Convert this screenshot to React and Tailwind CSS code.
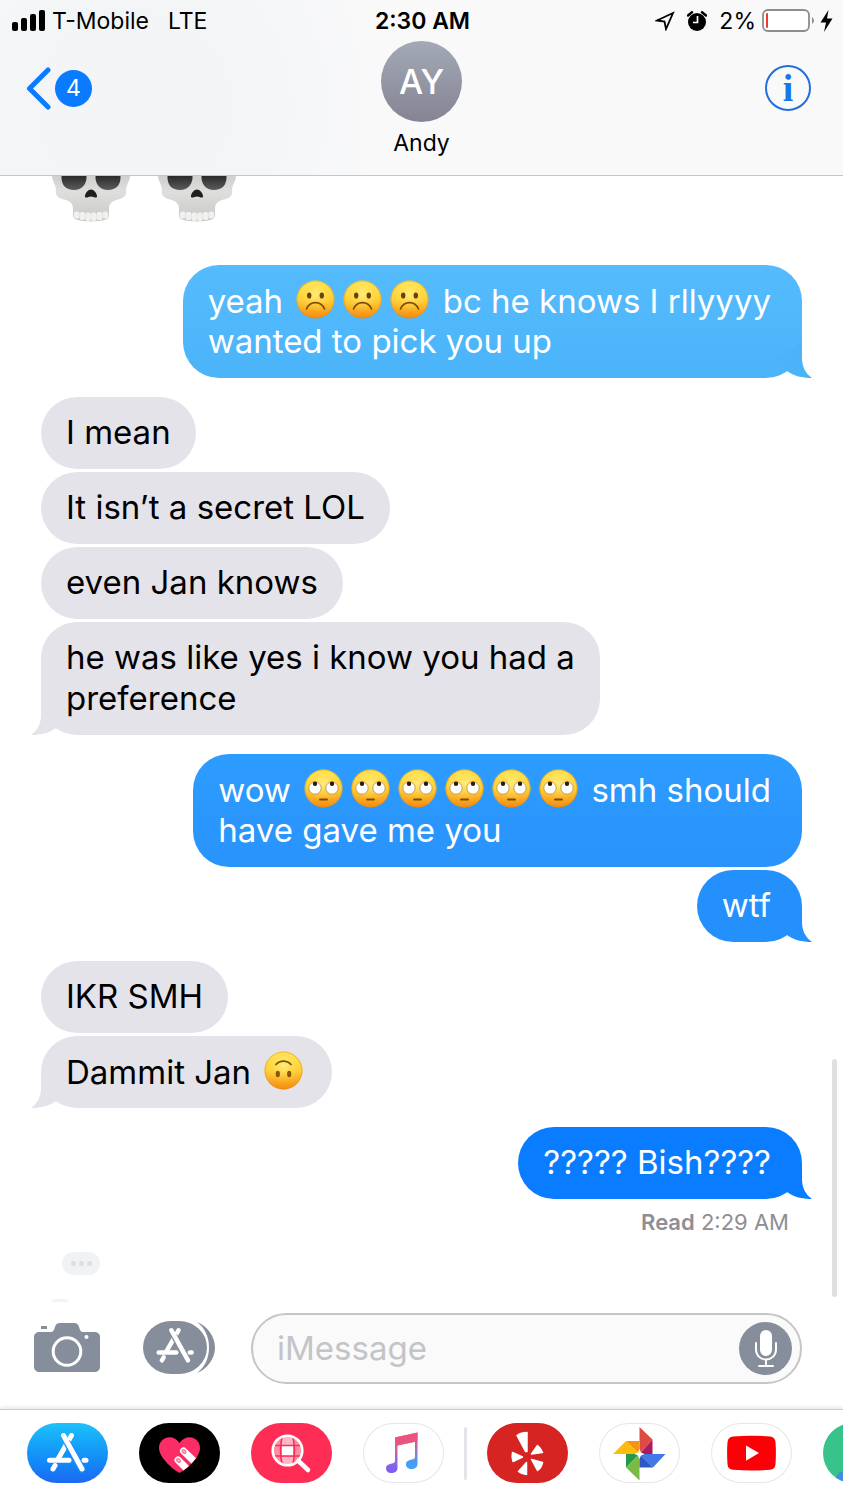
import React from "react";

function SharedDefs() {
  return (
    <svg className="absolute h-0 w-0" aria-hidden="true">
      <defs>
        <linearGradient id="face" x1="0" y1="0" x2="0" y2="1">
          <stop offset="0" stopColor="#ffe54f" />
          <stop offset="0.5" stopColor="#ffcf36" />
          <stop offset="1" stopColor="#f58a10" />
        </linearGradient>
        <radialGradient id="faceGlow" cx="0.5" cy="0.36" r="0.5">
          <stop offset="0" stopColor="#fff394" stopOpacity="0.75" />
          <stop offset="1" stopColor="#ffd83f" stopOpacity="0" />
        </radialGradient>
        <linearGradient id="bone" x1="0" y1="0" x2="0" y2="1">
          <stop offset="0" stopColor="#cfcfce" />
          <stop offset="0.35" stopColor="#dededd" />
          <stop offset="0.7" stopColor="#d2d2d1" />
          <stop offset="1" stopColor="#c9c9c8" />
        </linearGradient>
        <linearGradient id="socket" x1="0" y1="0" x2="0" y2="1">
          <stop offset="0" stopColor="#2a2a2a" />
          <stop offset="1" stopColor="#5c5c5c" />
        </linearGradient>
        <linearGradient id="note" x1="0" y1="0" x2="0" y2="1">
          <stop offset="0" stopColor="#f0506e" />
          <stop offset="0.35" stopColor="#d9609c" />
          <stop offset="0.75" stopColor="#8c63e8" />
          <stop offset="1" stopColor="#7a5cf5" />
        </linearGradient>
        <linearGradient id="noteBlue" x1="0" y1="0" x2="0" y2="1">
          <stop offset="0" stopColor="#f0506e" />
          <stop offset="0.4" stopColor="#b765b4" />
          <stop offset="0.8" stopColor="#4a9bf0" />
          <stop offset="1" stopColor="#3fa5f8" />
        </linearGradient>
        <clipPath id="heartClip">
          <path d="M40.500 50 C35 47 20 35 20 25 C20 14 34 10 40.500 20 C47 10 61 14 61 25 C61 35 46 47 40.500 50Z" />
        </clipPath>
        <clipPath id="globeClip">
          <circle cx="36.500" cy="27.500" r="14" />
        </clipPath>
      </defs>
    </svg>
  );
}

function Emoji({ label, children }) {
  return (
    <svg role="img" aria-label={label} viewBox="0 0 39 39" className="mx-1 mb-2 inline-block size-[39px] align-middle">
      <circle cx="19.5" cy="19.500" r="19" fill="url(#face)" />
      <circle cx="19.5" cy="19.500" r="18.500" fill="url(#faceGlow)" stroke="#e08a10" strokeOpacity="0.5" />
      {children}
    </svg>
  );
}

function Frown() {
  return (
    <Emoji label="frowning face">
      <ellipse cx="13.200" cy="15.500" rx="2.200" ry="3.100" fill="#6b4205" />
      <ellipse cx="25.800" cy="15.500" rx="2.200" ry="3.100" fill="#6b4205" />
      <path d="M10.500 29 C14 20.500 25 20.500 28.500 29" fill="none" stroke="#7a4a05" strokeWidth="1.600" strokeLinecap="round" />
    </Emoji>
  );
}

function RollingEyes() {
  return (
    <Emoji label="face with rolling eyes">
      <circle cx="11" cy="19" r="6.200" fill="#fff" stroke="#b8974e" strokeWidth="0.900" />
      <circle cx="28" cy="19" r="6.200" fill="#fff" stroke="#b8974e" strokeWidth="0.900" />
      <circle cx="11" cy="14.800" r="2.200" fill="#2e1a0c" />
      <circle cx="28" cy="14.800" r="2.200" fill="#2e1a0c" />
      <path d="M16 30.500 H23" stroke="#7a4a05" strokeWidth="1.800" strokeLinecap="round" />
    </Emoji>
  );
}

function UpsideDown() {
  return (
    <Emoji label="upside-down face">
      <path d="M12 13.500 C16 9 23 9 27 13.500" fill="none" stroke="#7a5205" strokeWidth="1.700" strokeLinecap="round" />
      <ellipse cx="13.800" cy="23" rx="2.100" ry="3.200" fill="#8a5607" />
      <ellipse cx="25.200" cy="23" rx="2.100" ry="3.200" fill="#8a5607" />
    </Emoji>
  );
}

function Skull() {
  return (
    <svg role="img" aria-label="skull" viewBox="0 0 80 46" className="h-[46px] w-20">
      <path
        d="M1 0 H79 C79 5 75 9 75 14 C76 20 73 22 65 24 C60 26 58 28 58 33 C58 38 59 42 55 43.500 C48 46 32 46 25 43.500 C21 42 22 38 22 33 C22 28 20 26 15 24 C7 22 4 20 5 14 C5 9 1 5 1 0Z"
        fill="url(#bone)"
      />
      <path d="M10.500 0 H35.500 C36 8 31 14 23 14 C15 14 10 9 10.500 0Z M44.500 0 H69.500 C70 9 65 14 57 14 C49 14 44 8 44.500 0Z" fill="url(#socket)" />
      <path d="M40 13.500 C43.500 13.500 46.500 18.500 46 21 C44.500 22.500 42.500 20.500 40 20.500 C37.500 20.500 35.500 22.500 34 21 C33.500 18.500 36.500 13.500 40 13.500Z" fill="#1f1f1f" />
      <g fill="#f1f1f0">
        <rect x="23" y="35.500" width="5.500" height="7" rx="2" />
        <rect x="28.700" y="36" width="5.500" height="8" rx="2" />
        <rect x="34.400" y="36.500" width="5.500" height="8.500" rx="2" />
        <rect x="40.100" y="36.500" width="5.500" height="8.500" rx="2" />
        <rect x="45.800" y="36" width="5.500" height="8" rx="2" />
        <rect x="51.500" y="35.500" width="5.500" height="7" rx="2" />
      </g>
    </svg>
  );
}

function Tail({ side, className }) {
  const flip = side === "left" ? "-left-[10px] -scale-x-100" : "-right-[10px]";
  return (
    <svg aria-hidden="true" viewBox="0 0 48 36" className={`absolute bottom-0 h-9 w-12 ${flip} ${className}`}>
      <path d="M38 0 V16 C38 24 41 31 48 36 C38 36 30 34 23 29 L10 20 Z" fill="currentColor" />
    </svg>
  );
}

function Bubble({ side, color, tail, children }) {
  const place = side === "left" ? "self-start pr-[25px] text-black" : "self-end pr-[31px] text-white";
  return (
    <div className={`relative max-w-[90%] rounded-[36px] pt-[15px] pb-4 pl-[25px] text-[33px] leading-[41px] ${place} ${color}`}>
      {children}
      {tail && <Tail side={side} className={tail} />}
    </div>
  );
}

const Line = ({ children }) => <p className="h-[41px] whitespace-nowrap">{children}</p>;
const GREY = "bg-[#e5e3ea]";

function StoreMark({ gap }) {
  return (
    <g fill="none" strokeLinecap="round" stroke="#fff" strokeWidth="5">
      <path d="M44.500 12.500 L31 36" />
      <path d="M22.500 37.300 H42" />
      <path d="M28 42.500 L26 46" />
      <path d="M57 37.300 H59" />
      <path d="M41 21 L54.500 46" stroke={gap} strokeWidth="7.500" />
      <path d="M36.500 12.500 L55 46" />
    </g>
  );
}

function AppPill({ label, className, children }) {
  return (
    <button type="button" aria-label={label} className={`h-[60px] w-[81px] shrink-0 overflow-hidden rounded-[30px] ${className}`}>
      <svg aria-hidden="true" viewBox="0 0 81 60" className="h-[60px] w-[81px]">
        {children}
      </svg>
    </button>
  );
}

const OUTLINED = "bg-white shadow-[inset_0_0_0_1px_#e6e6e9]";

function StatusBar() {
  return (
    <div className="grid h-[41px] grid-cols-3 items-center pr-[10px] pl-3 text-[23px] leading-7">
      <div className="flex items-center gap-[7px]">
        <svg role="img" aria-label="Signal strength" viewBox="0 0 33 21" className="h-[21px] w-[33px]">
          <rect x="0" y="12" width="6" height="9" rx="2" />
          <rect x="9" y="8" width="6" height="13" rx="2" />
          <rect x="18" y="4" width="6" height="17" rx="2" />
          <rect x="27" y="0" width="6" height="21" rx="2" />
        </svg>
        <span>T-Mobile</span>
        <span className="ml-3">LTE</span>
      </div>
      <time className="text-center font-semibold">2:30 AM</time>
      <div className="flex items-center justify-end">
        <svg aria-hidden="true" viewBox="0 0 20 20" className="size-5">
          <path d="M18 2 L2 9.500 L9.500 10.500 L11 18 Z" fill="none" stroke="#000" strokeWidth="1.800" strokeLinejoin="miter" />
        </svg>
        <svg aria-hidden="true" viewBox="0 0 20 20" className="ml-3 size-5">
          <circle cx="10" cy="11" r="9" />
          <path d="M1 4.500 L5 1.200 M19 4.500 L15 1.200" stroke="#000" strokeWidth="2.400" strokeLinecap="round" />
          <path d="M10.500 5 V11.500 H6" fill="none" stroke="#fff" strokeWidth="1.700" />
        </svg>
        <span className="ml-3">2%</span>
        <svg role="img" aria-label="Battery 2%" viewBox="0 0 53 23" className="ml-[6px] h-[23px] w-[53px]">
          <rect x="1" y="1" width="46" height="21" rx="5" fill="#fff" stroke="#8d8d8d" strokeWidth="1.800" />
          <rect x="4" y="4" width="2" height="15" rx="1" fill="#ef3b2f" />
          <path d="M50 8 Q54 11.500 50 15Z" fill="#8d8d8d" />
        </svg>
        <svg aria-hidden="true" viewBox="0 0 13 22" className="ml-[5px] h-[22px] w-[13px]">
          <path d="M8.500 0 L0.500 12.500 H6 L4 22 L12.500 8.500 H7 Z" />
        </svg>
      </div>
    </div>
  );
}

function Header() {
  return (
    <header className="h-44 shrink-0 border-b border-[#c6c6c9] bg-[#f9f9fa] bg-[radial-gradient(circle_at_16%_60%,#f2f4f6_0,#f3f5f7_18%,#f9f9fa_34%)]">
      <StatusBar />
      <div className="grid grid-cols-3 items-start">
        <a href="#messages" aria-label="Back, 4 unread" className="flex h-[94px] items-center gap-1 pl-[26px]">
          <svg aria-hidden="true" viewBox="0 0 25 43" className="h-[43px] w-[25px]">
            <path d="M22 3 L3.500 21.500 L22 40" fill="none" stroke="#0a7aff" strokeWidth="5" strokeLinecap="round" strokeLinejoin="round" />
          </svg>
          <span className="flex size-[37px] items-center justify-center rounded-full bg-[#0a7aff] text-[23px] text-white">4</span>
        </a>
        <div className="flex flex-col items-center">
          <div className="flex size-[81px] items-center justify-center rounded-full bg-linear-to-b from-[#a3a9b5] to-[#858494] text-[34px] font-medium text-white">
            AY
          </div>
          <h1 className="mt-[5px] text-[23px] leading-8">Andy</h1>
        </div>
        <div className="flex h-[94px] items-center justify-end pr-8">
          <button
            type="button"
            aria-label="Details"
            className="flex size-[46px] items-center justify-center rounded-full border-2 border-[#1f70dc] font-['Liberation_Serif',serif] text-[38px] leading-none font-bold text-[#1877e8]"
          >
            i
          </button>
        </div>
      </div>
    </header>
  );
}

function Conversation() {
  return (
    <main className="relative flex-1 overflow-hidden pr-[41px] pl-[41px]">
      <div className="flex gap-[26px] pl-[10px]">
        <Skull />
        <Skull />
      </div>
      <div className="mt-[43px] flex flex-col gap-[19px]">
        <section className="flex flex-col gap-[3px]">
          <Bubble side="right" color="bg-linear-to-b from-[#54bbfd] to-[#4bb4f9]" tail="text-[#4bb4f9]">
            <Line>
              yeah <Frown /><Frown /><Frown /> bc he knows I rllyyyy
            </Line>
            <Line>wanted to pick you up</Line>
          </Bubble>
        </section>
        <section className="flex flex-col gap-[3px]">
          <Bubble side="left" color={GREY}><Line>I mean</Line></Bubble>
          <Bubble side="left" color={GREY}><Line>It isn’t a secret LOL</Line></Bubble>
          <Bubble side="left" color={GREY}><Line>even Jan knows</Line></Bubble>
          <Bubble side="left" color={GREY} tail="text-[#e5e3ea]">
            <Line>he was like yes i know you had a</Line>
            <Line>preference</Line>
          </Bubble>
        </section>
        <section className="flex flex-col gap-[3px]">
          <Bubble side="right" color="bg-linear-to-b from-[#2d9cff] to-[#2993fc]">
            <Line>
              wow <RollingEyes /><RollingEyes /><RollingEyes /><RollingEyes /><RollingEyes /><RollingEyes /> smh should
            </Line>
            <Line>have gave me you</Line>
          </Bubble>
          <Bubble side="right" color="bg-[#2390fb]" tail="text-[#2390fb]"><Line>wtf</Line></Bubble>
        </section>
        <section className="flex flex-col gap-[3px]">
          <Bubble side="left" color={GREY}><Line>IKR SMH</Line></Bubble>
          <Bubble side="left" color={GREY} tail="text-[#e5e3ea]">
            <Line>Dammit Jan <UpsideDown /></Line>
          </Bubble>
        </section>
        <section className="flex flex-col gap-[3px]">
          <Bubble side="right" color="bg-[#0a7cff]" tail="text-[#0a7cff]"><Line>????? Bish????</Line></Bubble>
          <p className="mt-[6px] pr-[13px] text-right text-[22px] leading-7 text-[#8e8e93]">
            <b className="font-semibold">Read</b> 2:29 AM
          </p>
        </section>
      </div>
      <div className="mt-4 ml-[21px] flex h-[23px] w-[38px] items-center justify-center gap-[3px] rounded-full bg-[#f1f2f3]" aria-label="Typing">
        <i className="size-[5px] rounded-full bg-[#dcdee1]" />
        <i className="size-[5px] rounded-full bg-[#dcdee1]" />
        <i className="size-[5px] rounded-full bg-[#dcdee1]" />
      </div>
      <div className="mt-6 ml-[11px] h-[3px] w-4 rounded-t-full bg-[#f1f2f3]" />
      <div className="absolute right-[6px] bottom-[5px] h-[238px] w-[5px] rounded-full bg-[#e0e0e2]" />
    </main>
  );
}

function Composer() {
  return (
    <form className="flex h-[107px] shrink-0 items-start pt-[11px] pr-[41px] pl-[34px]" onSubmit={(e) => e.preventDefault()}>
      <button type="button" aria-label="Camera" className="mt-[9px] shrink-0">
        <svg aria-hidden="true" viewBox="0 0 66 50" className="h-[50px] w-[66px]">
          <path
            d="M6 10 H17 C20 10 20 7 21 5 C22 2 23 1 26 1 H40 C43 1 44 2 45 5 C46 7 46 10 49 10 H60 C64 10 66 12 66 15 V44 C66 48 64 50 60 50 H6 C2 50 0 48 0 44 V15 C0 12 2 10 6 10Z M7 4 H13 V7 H7Z"
            fill="#878e9b"
          />
          <circle cx="33" cy="29.500" r="13.800" fill="none" stroke="#fff" strokeWidth="3" />
          <circle cx="52.500" cy="15" r="2" fill="#fff" />
        </svg>
      </button>
      <button type="button" aria-label="App drawer" className="mt-2 ml-[43px] shrink-0">
        <svg aria-hidden="true" viewBox="0 0 72 53" className="h-[53px] w-[72px]">
          <path d="M54 1 C64 5 72 15 72 26.500 C72 38 64 48 54 52 C62 46 66 37 66 26.500 C66 16 62 7 54 1Z" fill="#878e9b" />
          <rect width="64" height="53" rx="28" ry="26.500" fill="#878e9b" />
          <g transform="translate(-4.500 -2) scale(0.9)">
            <StoreMark gap="#878e9b" />
          </g>
        </svg>
      </button>
      <div className="ml-9 flex h-[71px] min-w-0 flex-1 items-center rounded-full border-2 border-[#c6c6c8] bg-[#fafafa] pr-2 pl-6">
        <input
          type="text"
          aria-label="iMessage"
          placeholder="iMessage"
          className="min-w-0 flex-1 bg-transparent text-[33px] leading-[41px] outline-none placeholder:text-[#c3c4c8]"
        />
        <button type="button" aria-label="Dictate" className="size-[53px] shrink-0 rounded-full bg-[#878e9b]">
          <svg aria-hidden="true" viewBox="0 0 53 53" className="size-[53px]" fill="none" stroke="#fff" strokeWidth="2">
            <rect x="21" y="8" width="12" height="26" rx="6" fill="#fff" stroke="none" />
            <path d="M17 21 V27 C17 41 37 41 37 27 V21 M27 38 V44 M20 44 H34" strokeLinecap="round" />
          </svg>
        </button>
      </div>
    </form>
  );
}

function AppStrip() {
  return (
    <nav aria-label="iMessage apps" className="h-[89px] shrink-0 overflow-hidden border-t border-[#c9c9cb] shadow-[0_-2px_4px_#e9e9ea]">
      <div className="flex items-center gap-[31px] pt-[13px] pl-[27px]">
        <AppPill label="App Store" className="bg-linear-to-b from-[#1fc0fb] to-[#1c68f3]">
          <StoreMark gap="#1f8cf8" />
        </AppPill>
        <AppPill label="Digital Touch" className="bg-black">
          <g clipPath="url(#heartClip)">
            <rect width="81" height="60" fill="#fb2c66" />
            <g strokeLinecap="round" fill="none">
              <path d="M44 27.500 L60 43 M38.500 36.500 L54 52" stroke="#fb2c66" strokeWidth="9.500" />
              <path d="M44.500 28 L60 43 M39 37 L54 52" stroke="#fff" strokeWidth="7" />
              <path d="M44.500 28 L45.500 29 M39 37 L40 38" stroke="#f77298" strokeWidth="4" />
              <path d="M44.500 28 L45.500 29 M39 37 L40 38" stroke="#fbc3d1" strokeWidth="1.500" />
            </g>
          </g>
        </AppPill>
        <AppPill label="#images" className="bg-[#fe2d55]">
          <g clipPath="url(#globeClip)">
            <rect x="20" y="12" width="33" height="32" fill="#fe8ea3" />
            <rect x="31" y="23" width="11" height="10" fill="#fff" />
            <path d="M31 12 H42 V22 H31Z M31 34 H42 V44 H31Z" fill="#feb9c5" />
            <path d="M31.500 12 C29 22 29 33 31.500 43 M41.500 12 C44 22 44 33 41.500 43 M20 22.500 H53 M20 33 H53" fill="none" stroke="#fe2d55" strokeWidth="1.600" />
          </g>
          <circle cx="36.500" cy="27.500" r="14.800" fill="none" stroke="#fff" strokeWidth="2.600" />
          <path d="M47.500 38 L57 47" stroke="#fff" strokeWidth="4.500" strokeLinecap="round" />
        </AppPill>
        <AppPill label="Music" className={OUTLINED}>
          <path d="M32 14.500 L43 12 V20.500 L34.500 22.500 V45 C34.500 48 32 50 28 50 C25 50 23 48 23 45.500 C23 42 26 41 29 40.500 C31.500 40 32 39.500 32 37Z" fill="url(#note)" />
          <path d="M42.500 12.200 L54.500 9.500 V41 C54.500 44 52 46 48.500 46 C45 46 43 44 43 41.500 C43 38 46 37 49 36.500 C51.500 36 52 35.500 52 33 V18.700 L42.500 20.700Z" fill="url(#noteBlue)" />
          <path d="M32 14.500 L54.500 9.500 V18.200 L32 23Z" fill="#e9557f" />
        </AppPill>
        <div className="-mx-[11px] h-[53px] w-[3px] shrink-0 rounded-full bg-[#e3e4e9]" />
        <AppPill label="Yelp" className="bg-[#d52422]">
          <g fill="#fff" stroke="#fff" strokeWidth="1.500" strokeLinejoin="round">
            <path d="M30 12.500 Q34 9.500 40 9.500 V28.500 L38.500 28.500Z" />
            <path d="M25.500 29.500 L35.500 34 L26 38.500 Q24.500 34 25.500 29.500Z" />
            <path d="M44.500 31 L50.500 22.500 Q54 25 55.500 29.500Z" />
            <path d="M44.500 36.500 L55.500 39.500 Q54.500 44.500 50.500 47.500Z" />
            <path d="M39.500 39.500 V51.500 Q35 51.500 31.500 48.500Z" />
          </g>
        </AppPill>
        <AppPill label="Google Photos" className={OUTLINED}>
          <path d="M40.500 4 L53.500 16.500 L40.500 31Z" fill="#dd4b43" />
          <path d="M53.500 16.500 V31 H40.500Z" fill="#b0185d" />
          <path d="M14 31 L27 18 L40.500 31Z" fill="#fbbc0c" />
          <path d="M27 18 H40.500 V31Z" fill="#f59410" />
          <path d="M27 31 H40.500 L27 44.500Z" fill="#239a48" />
          <path d="M27 44.500 L40.500 31 V57.500Z" fill="#7cbb42" />
          <path d="M40.500 31 H66.500 L54 44.500Z" fill="#4179e8" />
          <path d="M40.500 31 L54 44.500 H40.500Z" fill="#3157c4" />
          <path d="M40.500 26 L42 29.500 L45.500 31 L42 32.500 L40.500 36 L39 32.500 L35.500 31 L39 29.500Z" fill="#fff" />
        </AppPill>
        <AppPill label="YouTube" className={OUTLINED}>
          <path d="M22 13.500 Q40.500 12 59 13.500 Q64 14 64.500 19 Q65.300 30 64.500 41.500 Q64 46.500 59 46.800 Q40.500 48 22 46.800 Q17 46.500 16.500 41.500 Q15.700 30 16.500 19 Q17 14 22 13.500Z" fill="#fb0007" />
          <path d="M35 22.500 L48 30 L35 37.800Z" fill="#fff" />
        </AppPill>
        <AppPill label="More apps" className="bg-[#37c389]">
          <path d="M8 60 L17 49 H81 V60Z" fill="#3d8fe0" />
        </AppPill>
      </div>
    </nav>
  );
}

export default function App() {
  return (
    <div className="relative flex min-h-screen flex-col overflow-hidden bg-white font-[Inter,'Liberation_Sans',sans-serif] text-black">
      <SharedDefs />
      <Header />
      <Conversation />
      <Composer />
      <AppStrip />
    </div>
  );
}
